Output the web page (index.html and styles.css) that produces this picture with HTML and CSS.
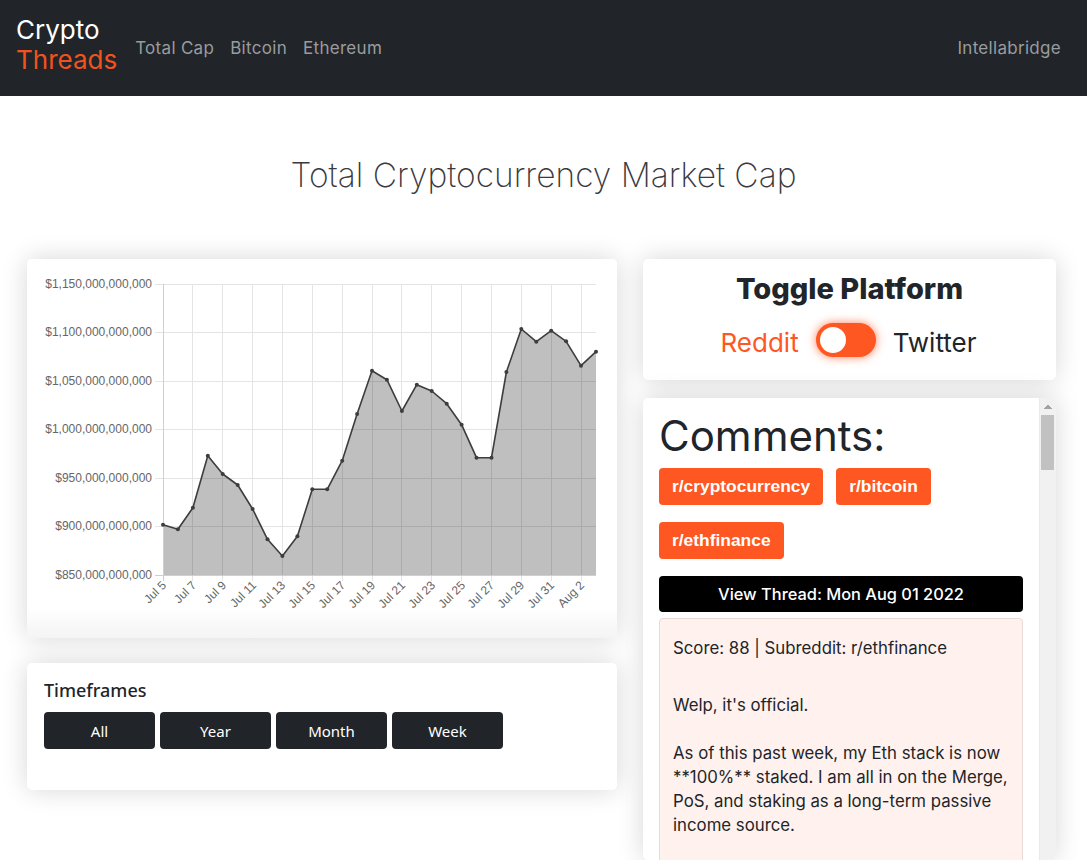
FILE: index.html
```html
<!DOCTYPE html>
<html lang="en">
<head>
<meta charset="utf-8">
<title>Crypto Threads</title>
<link rel="stylesheet" href="styles.css">
</head>
<body>
<nav class="navbar">
  <a class="brand" href="#"><span class="brand-top">Crypto</span><span class="brand-bottom">Threads</span></a>
  <ul class="nav-links">
    <li><a href="#">Total Cap</a></li>
    <li><a href="#">Bitcoin</a></li>
    <li><a href="#">Ethereum</a></li>
  </ul>
  <a class="nav-right" href="#">Intellabridge</a>
</nav>

<h1 class="page-title">Total Cryptocurrency Market Cap</h1>

<main class="layout">
  <section class="left-col">
    <div class="card chart-card">
      <svg class="chart" viewBox="35 267 574 363" width="574" height="363" xmlns="http://www.w3.org/2000/svg">
        <g class="grid" stroke="#e4e4e4" stroke-width="1">
          <line x1="155" y1="284.5" x2="596" y2="284.5"/>
          <line x1="155" y1="332.5" x2="596" y2="332.5"/>
          <line x1="155" y1="381.5" x2="596" y2="381.5"/>
          <line x1="155" y1="429.5" x2="596" y2="429.5"/>
          <line x1="155" y1="478.5" x2="596" y2="478.5"/>
          <line x1="155" y1="526.5" x2="596" y2="526.5"/>
          <line x1="192.5" y1="284" x2="192.5" y2="581"/>
          <line x1="222.5" y1="284" x2="222.5" y2="581"/>
          <line x1="252.5" y1="284" x2="252.5" y2="581"/>
          <line x1="282.5" y1="284" x2="282.5" y2="581"/>
          <line x1="312.5" y1="284" x2="312.5" y2="581"/>
          <line x1="342.5" y1="284" x2="342.5" y2="581"/>
          <line x1="372.5" y1="284" x2="372.5" y2="581"/>
          <line x1="401.5" y1="284" x2="401.5" y2="581"/>
          <line x1="431.5" y1="284" x2="431.5" y2="581"/>
          <line x1="461.5" y1="284" x2="461.5" y2="581"/>
          <line x1="491.5" y1="284" x2="491.5" y2="581"/>
          <line x1="521.5" y1="284" x2="521.5" y2="581"/>
          <line x1="551.5" y1="284" x2="551.5" y2="581"/>
          <line x1="581.5" y1="284" x2="581.5" y2="581"/>
        </g>
        <polygon fill="rgba(0,0,0,0.25)" points="163,524.7 177.9,529.3 192.9,507.7 207.8,455.7 222.7,474 237.7,485 252.6,509 267.5,539.3 282.4,556 297.4,536.3 312.3,489.3 327.2,489.3 342.2,460.7 357.1,414 372,370.7 386.9,379.7 401.9,411 416.8,384.7 431.7,391 446.7,403.7 461.6,424.7 476.5,457.7 491.5,457.7 506.4,372 521.3,329 536.3,341.7 551.2,330.7 566.1,341.3 581,365.7 596,351.7 596,575 163,575"/>
        <g stroke="#cfcfcf" stroke-width="1">
          <line x1="163.5" y1="284" x2="163.5" y2="581"/>
          <line x1="155" y1="575.5" x2="596" y2="575.5"/>
        </g>
        <polyline fill="none" stroke="#3d3d3d" stroke-width="1.6" stroke-linejoin="round" points="163,524.7 177.9,529.3 192.9,507.7 207.8,455.7 222.7,474 237.7,485 252.6,509 267.5,539.3 282.4,556 297.4,536.3 312.3,489.3 327.2,489.3 342.2,460.7 357.1,414 372,370.7 386.9,379.7 401.9,411 416.8,384.7 431.7,391 446.7,403.7 461.6,424.7 476.5,457.7 491.5,457.7 506.4,372 521.3,329 536.3,341.7 551.2,330.7 566.1,341.3 581,365.7 596,351.7"/>
        <g fill="#3d3d3d">
          <circle cx="163" cy="524.7" r="2"/><circle cx="177.9" cy="529.3" r="2"/><circle cx="192.9" cy="507.7" r="2"/><circle cx="207.8" cy="455.7" r="2"/><circle cx="222.7" cy="474" r="2"/><circle cx="237.7" cy="485" r="2"/><circle cx="252.6" cy="509" r="2"/><circle cx="267.5" cy="539.3" r="2"/><circle cx="282.4" cy="556" r="2"/><circle cx="297.4" cy="536.3" r="2"/><circle cx="312.3" cy="489.3" r="2"/><circle cx="327.2" cy="489.3" r="2"/><circle cx="342.2" cy="460.7" r="2"/><circle cx="357.1" cy="414" r="2"/><circle cx="372" cy="370.7" r="2"/><circle cx="386.9" cy="379.7" r="2"/><circle cx="401.9" cy="411" r="2"/><circle cx="416.8" cy="384.7" r="2"/><circle cx="431.7" cy="391" r="2"/><circle cx="446.7" cy="403.7" r="2"/><circle cx="461.6" cy="424.7" r="2"/><circle cx="476.5" cy="457.7" r="2"/><circle cx="491.5" cy="457.7" r="2"/><circle cx="506.4" cy="372" r="2"/><circle cx="521.3" cy="329" r="2"/><circle cx="536.3" cy="341.7" r="2"/><circle cx="551.2" cy="330.7" r="2"/><circle cx="566.1" cy="341.3" r="2"/><circle cx="581" cy="365.7" r="2"/><circle cx="596" cy="351.7" r="2"/>
        </g>
        <g class="axis-label" text-anchor="end">
          <text x="152" y="288">$1,150,000,000,000</text>
          <text x="152" y="336">$1,100,000,000,000</text>
          <text x="152" y="385">$1,050,000,000,000</text>
          <text x="152" y="433">$1,000,000,000,000</text>
          <text x="152" y="482">$950,000,000,000</text>
          <text x="152" y="530">$900,000,000,000</text>
          <text x="152" y="579">$850,000,000,000</text>
        </g>
        <g class="axis-label" text-anchor="end">
          <text x="167" y="586" transform="rotate(-45 167 586)">Jul 5</text>
          <text x="197" y="586" transform="rotate(-45 197 586)">Jul 7</text>
          <text x="227" y="586" transform="rotate(-45 227 586)">Jul 9</text>
          <text x="257" y="586" transform="rotate(-45 257 586)">Jul 11</text>
          <text x="286" y="586" transform="rotate(-45 286 586)">Jul 13</text>
          <text x="316" y="586" transform="rotate(-45 316 586)">Jul 15</text>
          <text x="346" y="586" transform="rotate(-45 346 586)">Jul 17</text>
          <text x="376" y="586" transform="rotate(-45 376 586)">Jul 19</text>
          <text x="406" y="586" transform="rotate(-45 406 586)">Jul 21</text>
          <text x="436" y="586" transform="rotate(-45 436 586)">Jul 23</text>
          <text x="466" y="586" transform="rotate(-45 466 586)">Jul 25</text>
          <text x="495" y="586" transform="rotate(-45 495 586)">Jul 27</text>
          <text x="525" y="586" transform="rotate(-45 525 586)">Jul 29</text>
          <text x="555" y="586" transform="rotate(-45 555 586)">Jul 31</text>
          <text x="585" y="586" transform="rotate(-45 585 586)">Aug 2</text>
        </g>
      </svg>
    </div>

    <div class="card timeframe-card">
      <h5 class="timeframe-title">Timeframes</h5>
      <div class="timeframe-buttons">
        <button class="tf-btn">All</button>
        <button class="tf-btn">Year</button>
        <button class="tf-btn">Month</button>
        <button class="tf-btn">Week</button>
      </div>
    </div>
  </section>

  <section class="right-col">
    <div class="card toggle-card">
      <h2 class="toggle-title">Toggle Platform</h2>
      <div class="toggle-row">
        <span class="platform active">Reddit</span>
        <span class="switch"><span class="knob"></span></span>
        <span class="platform">Twitter</span>
      </div>
    </div>

    <div class="card comments-card">
      <div class="comments-body">
        <h2 class="comments-title">Comments:</h2>
        <div class="sub-buttons">
          <button class="sub-btn">r/cryptocurrency</button>
          <button class="sub-btn">r/bitcoin</button>
          <button class="sub-btn">r/ethfinance</button>
        </div>

        <button class="thread-btn">View Thread: Mon Aug 01 2022</button>
        <div class="comment">
          <div class="comment-meta">Score: 88 | Subreddit: r/ethfinance</div>
          <p>Welp, it's official.</p>
          <p>As of this past week, my Eth stack is now **100%** staked. I am all in on the Merge, PoS, and staking as a long-term passive income source.</p>
        </div>
      </div>
      <div class="scrollbar" aria-hidden="true">
        <span class="scroll-arrow"></span>
        <span class="scroll-thumb"></span>
      </div>
    </div>
  </section>
</main>
</body>
</html>
```

FILE: styles.css
```css
* {
  box-sizing: border-box;
}

html, body {
  margin: 0;
  padding: 0;
  background: #ffffff;
}

body {
  font-family: Inter, "Noto Sans", sans-serif;
  color: #212529;
}

/* ---------- Navbar ---------- */
.navbar {
  display: flex;
  align-items: center;
  height: 96px;
  padding: 0 18px 0 16px;
  background: #212529;
}

.brand {
  display: flex;
  flex-direction: column;
  text-decoration: none;
  font-size: 26px;
  line-height: 30px;
  margin-top: -6px;
}

.brand-top {
  color: #ffffff;
}

.brand-bottom {
  color: #f4511e;
}

.nav-links {
  display: flex;
  list-style: none;
  margin: 0 0 0 10px;
  padding: 0;
}

.nav-links a,
.nav-right {
  display: block;
  padding: 8px 8px;
  color: #9a9c9f;
  text-decoration: none;
  font-size: 17px;
  line-height: 24px;
  letter-spacing: 0.3px;
}

.nav-right {
  margin-left: auto;
}

/* ---------- Title ---------- */
.page-title {
  margin: 59px 0 64px;
  text-align: center;
  font-weight: 200;
  font-size: 33.5px;
  line-height: 40px;
  color: #3a3a40;
}

/* ---------- Layout ---------- */
.layout {
  display: flex;
  gap: 26px;
  padding: 0 0 0 27px;
}

.left-col {
  display: flex;
  flex-direction: column;
  gap: 25px;
  width: 590px;
}

.right-col {
  display: flex;
  flex-direction: column;
  gap: 18px;
  width: 413px;
}

.card {
  background: #ffffff;
  border-radius: 5px;
  box-shadow: 0 0 26px rgba(0, 0, 0, 0.16);
}

/* ---------- Chart ---------- */
.chart-card {
  padding: 8px;
  height: 379px;
  background: linear-gradient(#ffffff 0, #ffffff 92%, #f4f4f4 100%);
}

.chart {
  display: block;
}

.axis-label {
  font-family: "Liberation Sans", Arial, sans-serif;
  font-size: 12px;
  fill: #666666;
}

/* ---------- Timeframes ---------- */
.timeframe-card {
  padding: 16px 16px 41px 17px;
}

.timeframe-title {
  margin: 0 0 11px;
  font-family: "Noto Sans", sans-serif;
  font-weight: 500;
  font-size: 18px;
  line-height: 22px;
  color: #212529;
}

.timeframe-buttons {
  display: flex;
  gap: 5px;
}

.tf-btn {
  width: 111px;
  height: 37px;
  border: none;
  border-radius: 4px;
  background: #212529;
  color: #ffffff;
  font-family: "Noto Sans", sans-serif;
  font-size: 15px;
  cursor: pointer;
}

/* ---------- Toggle ---------- */
.toggle-card {
  padding: 13px 0 20px;
  text-align: center;
}

.toggle-title {
  margin: 0 0 14px;
  font-weight: 800;
  font-size: 29px;
  line-height: 34px;
  color: #212529;
}

.toggle-row {
  display: flex;
  align-items: center;
  justify-content: center;
  gap: 17px;
  height: 40px;
  padding-right: 2px;
}

.platform {
  padding-top: 5px;
  font-size: 26px;
  line-height: 30px;
  color: #212529;
}

.platform.active {
  color: #ff5722;
}

.switch {
  display: flex;
  align-items: center;
  width: 60px;
  height: 34px;
  padding: 0 4px;
  border-radius: 17px;
  background: #ff5722;
  box-shadow: 0 0 10px rgba(255, 87, 34, 0.75);
}

.knob {
  width: 26px;
  height: 26px;
  border-radius: 50%;
  background: #ffffff;
}

/* ---------- Comments ---------- */
.comments-card {
  display: flex;
  height: 462px;
  overflow: hidden;
}

.comments-body {
  flex: 1;
  min-width: 0;
  overflow: hidden;
  padding: 14px 16px 0;
}

.scrollbar {
  display: flex;
  flex-direction: column;
  width: 17px;
  flex-shrink: 0;
  background: #f1f1f1;
  border-left: 1px solid #e9e9e9;
}

.scroll-arrow {
  display: block;
  height: 17px;
  background-image:
    linear-gradient(to bottom right, transparent 50%, #a3a3a3 50%),
    linear-gradient(to bottom left, transparent 50%, #a3a3a3 50%);
  background-size: 4px 4px, 4px 4px;
  background-position: 4px 7px, 8px 7px;
  background-repeat: no-repeat;
}

.scroll-thumb {
  display: block;
  height: 55px;
  margin: 0 2px 0 1px;
  background: #c1c1c1;
}

.comments-title {
  margin: 0 0 8px;
  font-weight: 400;
  font-size: 42px;
  line-height: 48px;
  color: #212529;
}

.sub-buttons {
  display: flex;
  flex-wrap: wrap;
  gap: 17px 13px;
  margin-bottom: 17px;
}

.sub-btn {
  height: 37px;
  padding: 0 13px;
  border: none;
  border-radius: 4px;
  background: #ff5722;
  color: #ffffff;
  font-family: "Liberation Sans", Arial, sans-serif;
  font-weight: 700;
  font-size: 17.4px;
  cursor: pointer;
}

.thread-btn {
  display: block;
  width: 100%;
  height: 36px;
  margin-bottom: 6px;
  border: none;
  border-radius: 4px;
  background: #000000;
  color: #ffffff;
  font-family: Inter, sans-serif;
  font-weight: 500;
  font-size: 16.4px;
  cursor: pointer;
}

.comment {
  margin-bottom: 17px;
  padding: 17px 8px 40px 13px;
  background: #fff1ee;
  border: 1px solid #ebd9d5;
  border-radius: 4px;
  font-size: 16.8px;
  line-height: 24px;
  color: #212529;
}

.comment-meta {
  margin-bottom: 33px;
}

.comment p {
  margin: 0 0 24px;
}
```
